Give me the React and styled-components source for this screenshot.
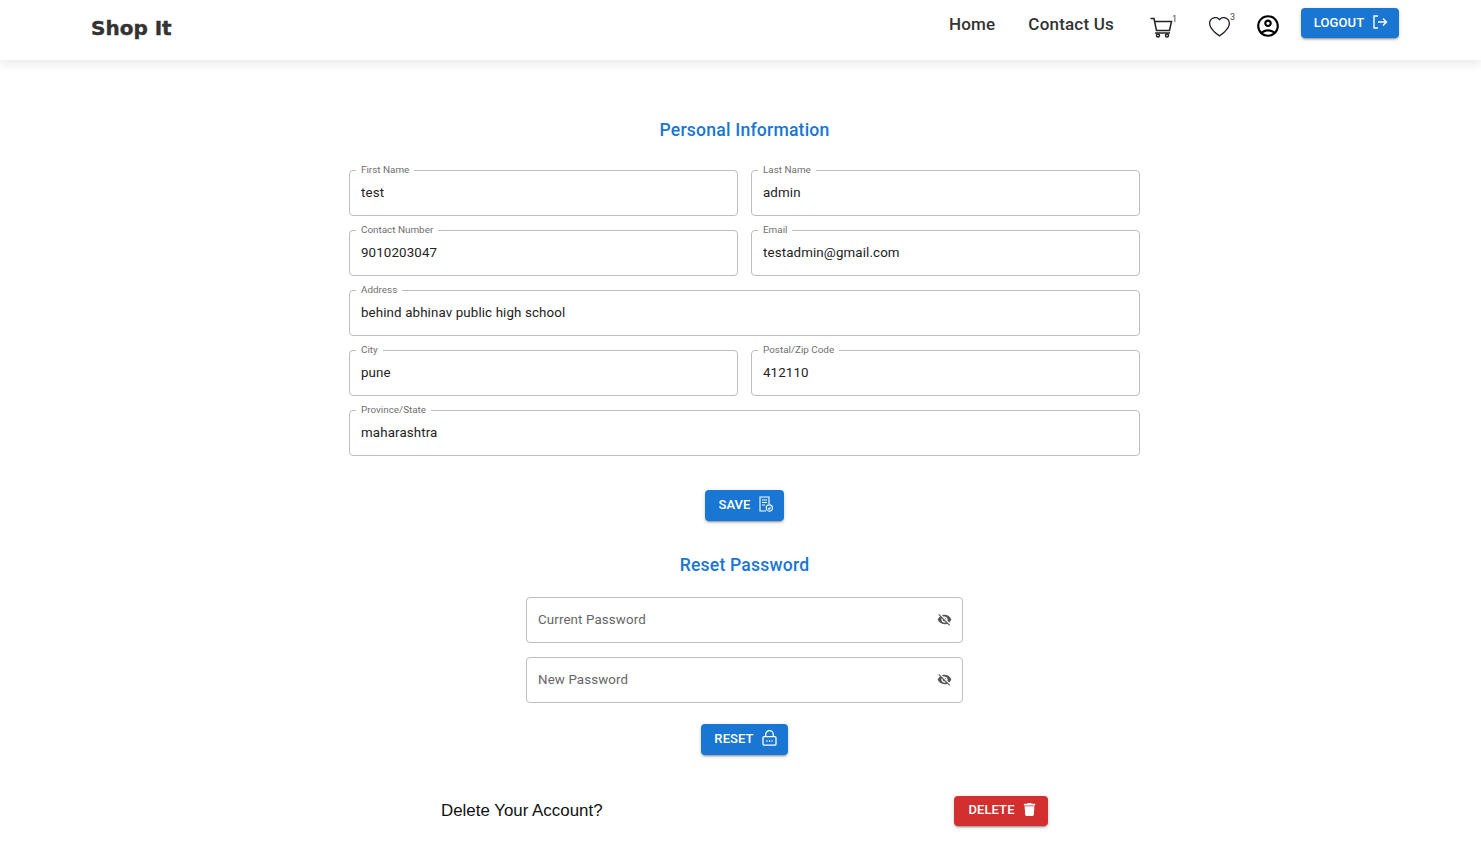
import React from 'react'
import styled, { createGlobalStyle } from 'styled-components'
import { FaTrash } from 'react-icons/fa'
import { BsHeart } from 'react-icons/bs'
import { MdOutlineAccountCircle, MdVisibilityOff } from 'react-icons/md'

const GlobalStyle = createGlobalStyle`
  * { box-sizing: border-box; }
  html, body { margin: 0; padding: 0; background: #fff; }
  body { font-family: Roboto, "Liberation Sans", sans-serif; color: #111; }
`

const Header = styled.header`
  height: 60px;
  display: flex;
  align-items: flex-start;
  justify-content: space-between;
  padding: 8px 82px 0 91px;
  background: #fff;
  box-shadow: 0 2px 12px rgba(0, 0, 0, 0.12);
`
const Logo = styled.div`
  font-family: "DejaVu Sans", sans-serif;
  font-weight: 700;
  font-size: 20px;
  line-height: 24px;
  margin-top: 8px;
  color: #333;
  -webkit-text-stroke: 0.4px #333;
`
const Nav = styled.nav`
  display: flex;
  align-items: flex-start;
`
const NavLink = styled.a`
  font-size: 17px;
  font-weight: 500;
  line-height: 20px;
  letter-spacing: 0.2px;
  margin-top: 6px;
  margin-right: ${p => p.$mr}px;
  color: #333;
`
const IconLink = styled.span`
  position: relative;
  display: flex;
  width: ${p => p.$w}px;
  margin-right: ${p => p.$mr}px;
  margin-top: ${p => p.$mt}px;
  color: ${p => p.$color || '#222'};
`
const Count = styled.sup`
  position: absolute;
  top: ${p => p.$top}px;
  right: -4px;
  font-size: 9px;
  line-height: 10px;
  color: #444;
`
const Button = styled.button`
  display: inline-flex;
  align-items: center;
  justify-content: center;
  gap: 8px;
  width: ${p => p.$w}px;
  height: ${p => p.$h || 30.75}px;
  border: none;
  border-radius: 4px;
  padding: 0 0 2px 2px;
  background: ${p => p.$bg || '#1976d2'};
  color: #fff;
  font-family: Roboto, sans-serif;
  font-size: 13px;
  font-weight: 500;
  letter-spacing: 0.1px;
  text-transform: uppercase;
  box-shadow: 0 3px 1px -2px rgba(0,0,0,.2), 0 2px 2px 0 rgba(0,0,0,.14), 0 1px 5px 0 rgba(0,0,0,.12);
`
const Main = styled.main`
  display: flex;
  flex-direction: column;
  align-items: center;
  padding: 60px 0 0 8px;
`
const Title = styled.h2`
  margin: 0;
  font-size: 17.6px;
  font-weight: 500;
  line-height: 21px;
  letter-spacing: 0.2px;
  color: #1976d2;
`
const InfoGrid = styled.div`
  width: 791px;
  margin-top: 29px;
  display: grid;
  grid-template-columns: 389px 389px;
  column-gap: 13px;
  row-gap: 14px;
`
const Field = styled.div`
  position: relative;
  height: 46px;
  padding: 0 11px;
  border: 1px solid #bdbdbd;
  border-radius: 4px;
  grid-column: ${p => (p.$wide ? '1 / -1' : 'auto')};
  display: flex;
  align-items: center;
`
const Legend = styled.label`
  position: absolute;
  top: -7px;
  left: 6px;
  padding: 0 5px;
  background: #fff;
  font-size: 9.9px;
  line-height: 12px;
  color: #6f6f6f;
`
const Input = styled.input`
  width: 100%;
  height: 20px;
  margin-bottom: 1px;
  border: none;
  outline: none;
  padding: 0;
  background: transparent;
  font-family: Roboto, sans-serif;
  font-size: 13.33px;
  letter-spacing: 0.12px;
  color: #222;
  &::placeholder { color: #666; opacity: 1; }
`
const PasswordList = styled.div`
  width: 437px;
  margin-top: 21px;
  display: flex;
  flex-direction: column;
  gap: 14px;
`
const EyeToggle = styled.span`
  display: flex;
  margin-right: -1px;
  color: #555;
`
const DeleteRow = styled.div`
  width: 607px;
  margin-top: 41px;
  margin-bottom: 38px;
  display: flex;
  align-items: center;
  justify-content: space-between;
`
const DeleteText = styled.span`
  font-family: "Liberation Sans", sans-serif;
  font-size: 16.9px;
  color: #111;
`
const SaveWrap = styled.div`
  margin-top: 34px;
  margin-bottom: 34px;
  display: flex;
`
const ResetWrap = styled.div`
  margin-top: 21px;
  display: flex;
`

const CartIcon = () => (
  <svg width="23" height="21" viewBox="0 0 23 21" fill="none" stroke="currentColor" strokeWidth="1.5">
    <path d="M0.5 1.5H4L6.5 13.5H19.5L21.5 4.5H4.6" />
    <path d="M5 16H20" />
    <circle cx="8" cy="18.5" r="1.5" />
    <circle cx="17" cy="18.5" r="1.5" />
  </svg>
)

const LogoutIcon = () => (
  <svg width="16" height="16" viewBox="0 0 16 16" fill="none" stroke="currentColor" strokeWidth="1.4">
    <path d="M6 2H2v12h4M6 8h8.5M11 4.5 14.5 8 11 11.5" />
  </svg>
)

const SaveIcon = () => (
  <svg width="14" height="16" viewBox="0 0 14 16" fill="none" stroke="currentColor" strokeWidth="1.1">
    <path d="M7 15H1V1h9v7" />
    <path d="M3 4h5M3 6.5h5M3 9h3" />
    <circle cx="10.3" cy="12" r="3.1" />
    <path d="m9 12.3 1 .9 1.5-1.9" />
  </svg>
)

const LockIcon = () => (
  <svg width="15" height="16" viewBox="0 0 15 16" fill="none" stroke="currentColor" strokeWidth="1.3">
    <rect x="1" y="6.6" width="13" height="8.6" rx="1.2" />
    <path d="M3.7 6.5V4.4a3.8 3.8 0 0 1 7.6 0v2.1" />
    <path d="M4.4 11h1.2M6.9 11h1.2M9.4 11h1.2" />
  </svg>
)

const App = () => {
  const info = [
    { label: 'First Name', value: 'test' },
    { label: 'Last Name', value: 'admin' },
    { label: 'Contact Number', value: '9010203047' },
    { label: 'Email', value: 'testadmin@gmail.com' },
    { label: 'Address', value: 'behind abhinav public high school', wide: true },
    { label: 'City', value: 'pune' },
    { label: 'Postal/Zip Code', value: '412110' },
    { label: 'Province/State', value: 'maharashtra', wide: true },
  ]

  return (
    <>
      <GlobalStyle />
      <Header>
        <Logo>Shop It</Logo>
        <Nav>
          <NavLink $mr={33}>Home</NavLink>
          <NavLink $mr={36}>Contact Us</NavLink>
          <IconLink $w={23} $mr={36} $mt={9}>
            <CartIcon />
            <Count $top={-3}>1</Count>
          </IconLink>
          <IconLink $w={22} $mr={24} $mt={9}>
            <BsHeart size={21} />
            <Count $top={-5}>3</Count>
          </IconLink>
          <IconLink $w={26} $mr={20} $mt={5} $color="#000">
            <MdOutlineAccountCircle size={26} />
          </IconLink>
          <Button $w={98} $h={30}>Logout <LogoutIcon /></Button>
        </Nav>
      </Header>
      <Main>
        <Title>Personal Information</Title>
        <InfoGrid>
          {info.map(f => (
            <Field key={f.label} $wide={f.wide}>
              <Legend>{f.label}</Legend>
              <Input defaultValue={f.value} />
            </Field>
          ))}
        </InfoGrid>
        <SaveWrap>
          <Button $w={79}>Save <SaveIcon /></Button>
        </SaveWrap>
        <Title>Reset Password</Title>
        <PasswordList>
          <Field>
            <Input placeholder="Current Password" />
            <EyeToggle><MdVisibilityOff size={15} /></EyeToggle>
          </Field>
          <Field>
            <Input placeholder="New Password" />
            <EyeToggle><MdVisibilityOff size={15} /></EyeToggle>
          </Field>
        </PasswordList>
        <ResetWrap>
          <Button $w={87}>Reset <LockIcon /></Button>
        </ResetWrap>
        <DeleteRow>
          <DeleteText>Delete Your Account?</DeleteText>
          <Button $w={94} $bg="#d32f2f">Delete <FaTrash size={13} /></Button>
        </DeleteRow>
      </Main>
    </>
  )
}

export default App
